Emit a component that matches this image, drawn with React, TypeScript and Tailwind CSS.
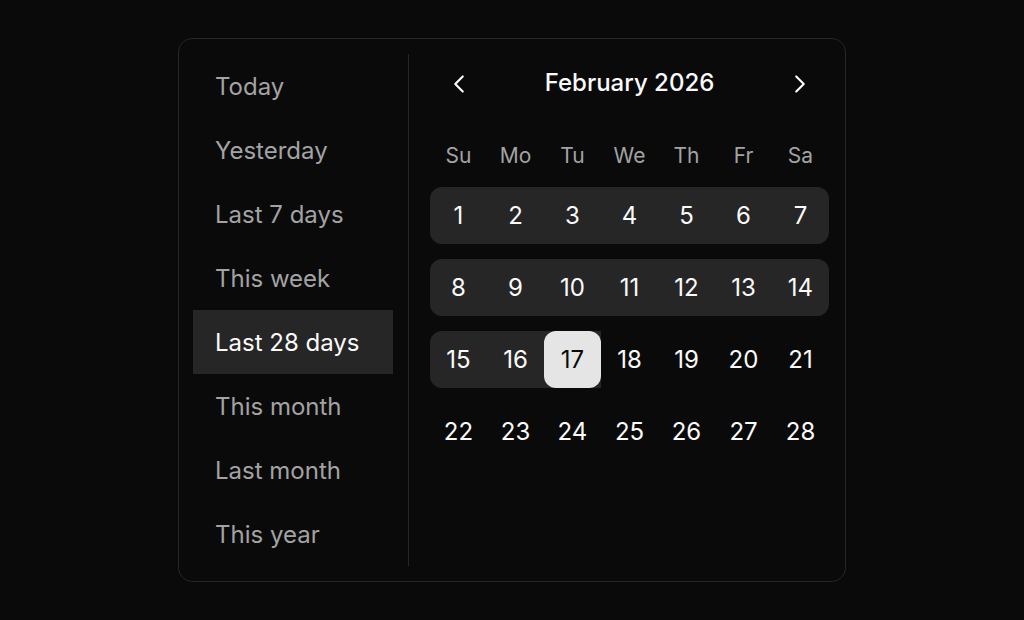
import React, { useState } from 'react';
import { ChevronLeft, ChevronRight } from 'lucide-react';

const presets = [
	'Today',
	'Yesterday',
	'Last 7 days',
	'This week',
	'Last 28 days',
	'This month',
	'Last month',
	'This year',
];

const weekdays = ['Su', 'Mo', 'Tu', 'We', 'Th', 'Fr', 'Sa'];

// Feb 2026 starts on a Sunday, so four clean weeks
const weeks = [0, 1, 2, 3].map((w) => Array.from({ length: 7 }, (_, i) => w * 7 + i + 1));

const RANGE_START = 1;
const RANGE_END = 17;

const DayCell: React.FC<{ day: number; col: number }> = ({ day, col }) => {
	const inRange = day >= RANGE_START && day <= RANGE_END;
	const isEnd = day === RANGE_END;
	const first = col === 0;
	const last = col === 6;

	let wrap = '';
	if (inRange) {
		wrap = 'bg-[#262626]';
		if (first) wrap += ' rounded-l-[12px]';
		if (last && !isEnd) wrap += ' rounded-r-[12px]';
	}

	return (
		<div className={`h-[57px] ${wrap}`}>
			<div
				className={`h-full flex items-center justify-center text-[24px] ${
					isEnd ? 'bg-[#e5e5e5] text-[#0a0a0a] rounded-[12px]' : 'text-[#fafafa]'
				}`}
			>
				{day}
			</div>
		</div>
	);
};

const App: React.FC = () => {
	const [active, setActive] = useState('Last 28 days');

	return (
		<div
			className="min-h-screen bg-[#0a0a0a] flex justify-center pt-[38px]"
			style={{ fontFamily: 'Inter, "Liberation Sans", sans-serif' }}
		>
			<div className="w-[668px] h-[544px] border border-[#262626] rounded-[14px] pl-[14px] pr-[15px] py-[15px] flex">
				<div className="w-[200px] flex flex-col">
					{presets.map((p) => (
						<button
							key={p}
							onClick={() => setActive(p)}
							className={`h-16 px-[22px] pt-[2px] flex items-center text-left text-[24px] ${
								active === p ? 'bg-[#262626] text-[#fafafa]' : 'text-[#a3a3a3]'
							}`}
						>
							{p}
						</button>
					))}
				</div>

				<div className="ml-[15px] w-px bg-[#262626]" />

				<div className="flex-1 pl-[21px]">
					<div className="w-[399px]">
						<div className="h-[56px] flex items-center justify-between">
							<button className="w-[57px] mt-[3px] flex justify-center text-[#fafafa]">
								<ChevronLeft size={30} strokeWidth={1.7} />
							</button>
							<span className="text-[24px] font-medium text-[#fafafa] pt-px">February 2026</span>
							<button className="w-[57px] mt-[3px] flex justify-center text-[#fafafa]">
								<ChevronRight size={30} strokeWidth={1.7} />
							</button>
						</div>

						<div className="mt-[30px] h-8 grid grid-cols-7">
							{weekdays.map((d) => (
								<div key={d} className="flex items-center justify-center text-[21px] text-[#a3a3a3]">
									{d}
								</div>
							))}
						</div>

						<div className="mt-[15px] flex flex-col gap-[15px]">
							{weeks.map((week, wi) => (
								<div key={wi} className="grid grid-cols-7">
									{week.map((day, col) => (
										<DayCell key={day} day={day} col={col} />
									))}
								</div>
							))}
						</div>
					</div>
				</div>
			</div>
		</div>
	);
};

export default App;
